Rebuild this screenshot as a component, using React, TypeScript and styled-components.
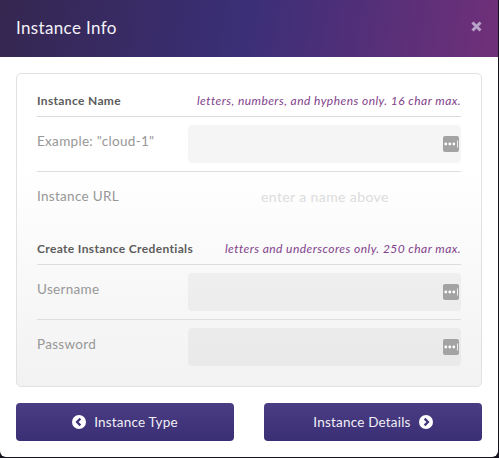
import React from "react";
import styled, { createGlobalStyle } from "styled-components";

const GlobalStyle = createGlobalStyle`
  html, body {
    margin: 0;
    padding: 0;
    background: #15131f;
  }
  * {
    box-sizing: border-box;
  }
`;

const Modal = styled.div`
  width: 498px;
  height: 457px;
  background: #fff;
  border-radius: 0 0 6px 6px;
  overflow: hidden;
  font-family: Lato, "Liberation Sans", sans-serif;
  display: flex;
  flex-direction: column;
`;

const Header = styled.div`
  height: 57px;
  padding: 0 16px;
  display: flex;
  align-items: center;
  justify-content: space-between;
  background: linear-gradient(100deg, #352750 0%, #3b2f78 50%, #703079 100%);
`;

const Title = styled.h1`
  margin: -3px 0 0;
  font-size: 17px;
  font-weight: 400;
  letter-spacing: 0.35px;
  color: #f4f2f8;
`;

const Close = styled.svg`
  width: 11px;
  height: 11px;
  margin-top: -4px;
`;

const Body = styled.div`
  flex: 1;
  padding: 16px;
  display: flex;
  flex-direction: column;
  gap: 16px;
`;

const Panel = styled.div`
  height: 314px;
  padding: 14px 20px 0;
  border: 1px solid #e2e2e2;
  border-radius: 5px;
  background: linear-gradient(180deg, #fff 0%, #fff 30%, #f2f2f2 100%);
`;

const SectionHead = styled.div<{ $gap?: number }>`
  height: 29px;
  margin-top: ${(p) => p.$gap ?? 0}px;
  padding-bottom: 4px;
  display: flex;
  align-items: center;
  justify-content: space-between;
  border-bottom: 1px solid #dcdcdc;
`;

const SectionTitle = styled.span`
  font-size: 12px;
  font-weight: 700;
  letter-spacing: 0.35px;
  color: #5c5c5c;
`;

const Hint = styled.span`
  font-size: 12px;
  font-style: italic;
  letter-spacing: 0.45px;
  color: #823f8c;
`;

const Row = styled.div<{ $last?: boolean }>`
  height: 55px;
  padding-top: 8px;
  display: flex;
  justify-content: space-between;
  border-bottom: ${(p) => (p.$last ? "none" : "1px solid #dfdfdf")};
`;

const Label = styled.label`
  padding-top: 6px;
  font-size: 13.5px;
  line-height: 20px;
  letter-spacing: 0.3px;
  color: #979797;
`;

const Field = styled.div`
  width: 273px;
  height: 38px;
  padding-right: 2px;
  border-radius: 4px;
  background: rgba(0, 0, 0, 0.04);
  display: flex;
  align-items: center;
  justify-content: flex-end;
`;

const KeyBadge = styled.svg`
  width: 16px;
  height: 16px;
`;

const UrlRow = styled.div`
  height: 51px;
  padding-bottom: 9px;
  display: flex;
  align-items: center;
  justify-content: space-between;
`;

const UrlHint = styled.span`
  width: 273px;
  padding-left: 73px;
  padding-top: 6px;
  font-size: 14px;
  letter-spacing: 0.4px;
  color: #dcdcdc;
`;

const Footer = styled.div`
  display: flex;
  justify-content: space-between;
`;

const NavButton = styled.button`
  width: 218px;
  height: 38px;
  padding: 0 0 1px;
  border: 0;
  border-radius: 4px;
  background: linear-gradient(180deg, #4a3d83 0%, #3a2e74 100%);
  color: #f1eff7;
  font-family: inherit;
  font-size: 13.5px;
  letter-spacing: 0.2px;
  display: flex;
  align-items: center;
  justify-content: center;
  gap: 8px;
`;

const Chevron = styled.svg`
  width: 14px;
  height: 14px;
`;

const PasswordKey = () => (
  <KeyBadge viewBox="0 0 16 16">
    <rect width="16" height="16" rx="2" fill="#a3a3a3" />
    <circle cx="2.8" cy="8" r="1.4" fill="#fff" />
    <circle cx="6.8" cy="8" r="1.4" fill="#fff" />
    <circle cx="10.8" cy="8" r="1.4" fill="#fff" />
    <rect x="14.2" y="4.5" width="0.8" height="7" fill="#fff" />
  </KeyBadge>
);

const ArrowCircle = ({ back }: { back?: boolean }) => (
  <Chevron viewBox="0 0 14 14">
    <circle cx="7" cy="7" r="7" fill="#fff" />
    <path
      d={back ? "M8.4 3.6 5 7l3.4 3.4" : "M5.6 3.6 9 7l-3.4 3.4"}
      fill="none"
      stroke="#40337a"
      strokeWidth="2.2"
    />
  </Chevron>
);

const App = () => (
  <Modal>
    <GlobalStyle />
    <Header>
      <Title>Instance Info</Title>
      <Close viewBox="0 0 11 11">
        <path
          d="M1.5 1.5l8 8M9.5 1.5l-8 8"
          stroke="#b9a3c8"
          strokeWidth="3"
          fill="none"
        />
      </Close>
    </Header>
    <Body>
      <Panel>
        <SectionHead>
          <SectionTitle>Instance Name</SectionTitle>
          <Hint>letters, numbers, and hyphens only. 16 char max.</Hint>
        </SectionHead>
        <Row>
          <Label>Example: "cloud-1"</Label>
          <Field>
            <PasswordKey />
          </Field>
        </Row>
        <UrlRow>
          <Label>Instance URL</Label>
          <UrlHint>enter a name above</UrlHint>
        </UrlRow>
        <SectionHead $gap={13}>
          <SectionTitle>Create Instance Credentials</SectionTitle>
          <Hint>letters and underscores only. 250 char max.</Hint>
        </SectionHead>
        <Row>
          <Label>Username</Label>
          <Field>
            <PasswordKey />
          </Field>
        </Row>
        <Row $last>
          <Label>Password</Label>
          <Field>
            <PasswordKey />
          </Field>
        </Row>
      </Panel>
      <Footer>
        <NavButton>
          <ArrowCircle back />
          Instance Type
        </NavButton>
        <NavButton>
          Instance Details
          <ArrowCircle />
        </NavButton>
      </Footer>
    </Body>
  </Modal>
);

export default App;
